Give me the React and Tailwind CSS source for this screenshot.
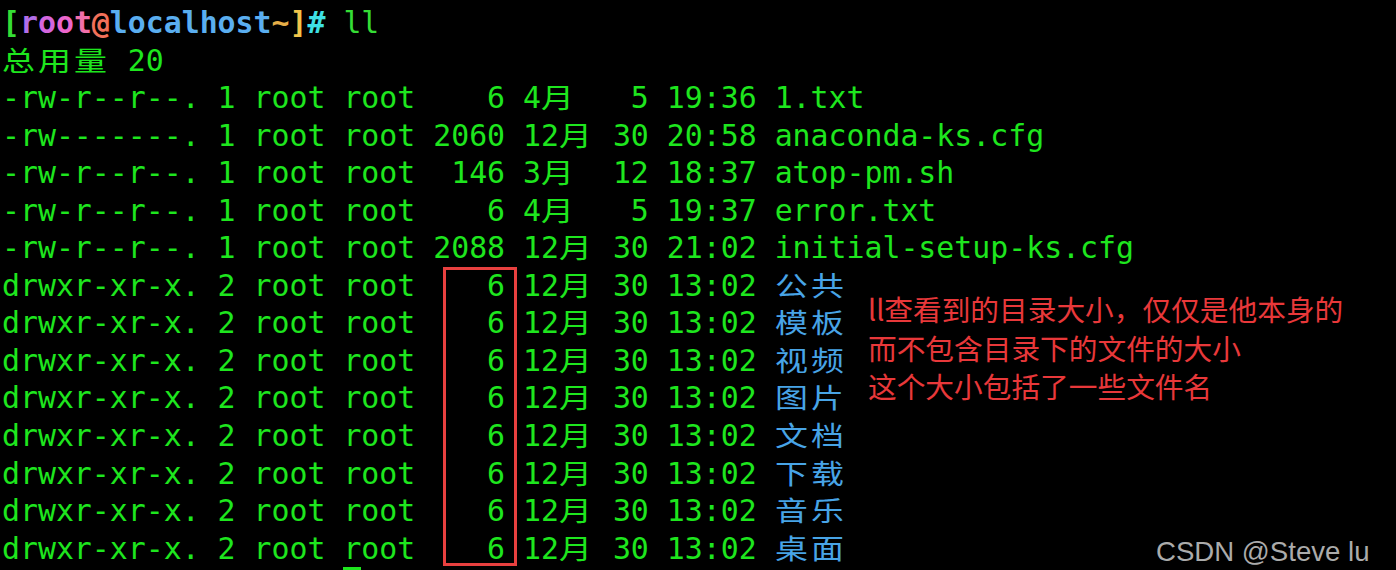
const CJK = /[\u2e80-\u9fff\uff00-\uffef]/;

// terminal cell: 29.85px DejaVu Sans Mono -> ~17.97px per column, wide chars take two
function Glyphs({ text }) {
  const out = [];
  let buf = '';
  [...text].forEach((ch, i) => {
    if (CJK.test(ch)) {
      if (buf) {
        out.push(buf);
        buf = '';
      }
      out.push(
        <span
          key={i}
          className="inline-block w-[35.94px] origin-left scale-x-[1.22] font-['Noto_Sans_CJK_SC',sans-serif] text-[27px] leading-none"
        >
          {ch}
        </span>
      );
    } else {
      buf += ch;
    }
  });
  if (buf) out.push(buf);
  return <>{out}</>;
}

const files = [
  ['-rw-r--r--. 1 root root    6 4月   5 19:36 ', '1.txt'],
  ['-rw-------. 1 root root 2060 12月 30 20:58 ', 'anaconda-ks.cfg'],
  ['-rw-r--r--. 1 root root  146 3月  12 18:37 ', 'atop-pm.sh'],
  ['-rw-r--r--. 1 root root    6 4月   5 19:37 ', 'error.txt'],
  ['-rw-r--r--. 1 root root 2088 12月 30 21:02 ', 'initial-setup-ks.cfg'],
];

const dirs = ['公共', '模板', '视频', '图片', '文档', '下载', '音乐', '桌面'];

function Row({ children }) {
  return <div className="h-[37.55px] whitespace-pre leading-[37.55px]">{children}</div>;
}

function Prompt() {
  return (
    <span className="font-bold">
      <span className="text-[#35dd35]">[</span>
      <span className="text-[#b26ee8]">r</span>
      <span className="text-[#d466de]">o</span>
      <span className="text-[#ec66cc]">o</span>
      <span className="text-[#f270aa]">t</span>
      <span className="text-[#f2705a]">@</span>
      <span className="text-[#5aaef0]">localhost</span>
      <span className="text-[#e6ae48]">~</span>
      <span className="text-[#f2c44a]">]</span>
      <span className="text-[#3ee0e6]">#</span>
      <span> </span>
    </span>
  );
}

export default function App() {
  return (
    <div className="relative h-[570px] w-[1396px] overflow-hidden bg-black">
      <div className="pl-[2px] pt-[4px] font-['DejaVu_Sans_Mono','Noto_Sans_CJK_SC',monospace] text-[29.85px] text-[#1ee61e]">
        <Row>
          <Prompt />
          <span className="text-[#35dd35]">ll</span>
        </Row>
        <Row>
          <Glyphs text="总用量 20" />
        </Row>
        {files.map(([meta, name]) => (
          <Row key={name}>
            <Glyphs text={meta} />
            {name}
          </Row>
        ))}
        {dirs.map((name) => (
          <Row key={name}>
            <Glyphs text="drwxr-xr-x. 2 root root    6 12月 30 13:02 " />
            <span className="text-[#48a4e6]">
              <Glyphs text={name} />
            </span>
          </Row>
        ))}
        {/* next prompt line, only the top of the cursor is in view */}
        <Row>
          <span className="inline-block w-[341.4px]" />
          <span className="inline-block h-full w-[17.97px] bg-[#1ee61e] align-top" />
        </Row>
      </div>

      {/* red marker round the size column */}
      <div className="absolute left-[443px] top-[267px] h-[299px] w-[74px] border-[3px] border-[#e8403f]" />

      <div className="absolute left-[868px] top-[290px] font-['Noto_Sans_CJK_SC',sans-serif] text-[28.7px] leading-[38.5px] text-[#e8383a]">
        <p>ll查看到的目录大小，仅仅是他本身的</p>
        <p>而不包含目录下的文件的大小</p>
        <p>这个大小包括了一些文件名</p>
      </div>

      <div className="absolute left-[1156px] top-[538px] font-['Liberation_Sans',Arial,sans-serif] text-[27.6px] leading-none text-[#ababab]">
        CSDN @Steve lu
      </div>
    </div>
  );
}
